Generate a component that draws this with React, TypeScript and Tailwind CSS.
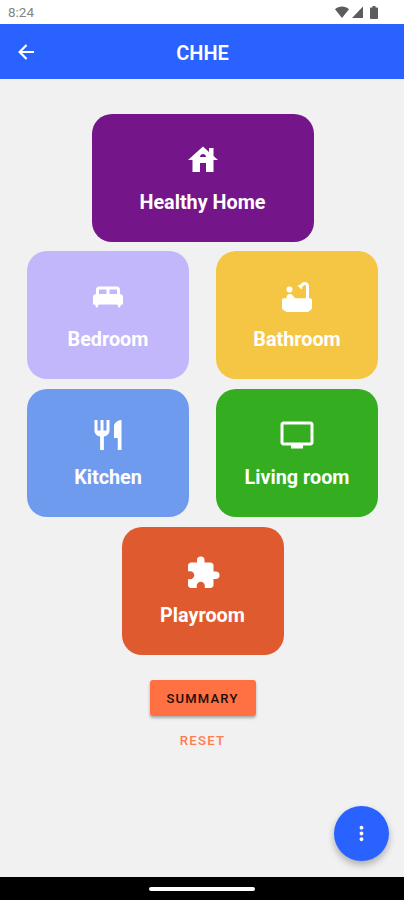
import type { ComponentType } from "react";
import {
  MdExtension,
  MdHouse,
  MdKingBed,
  MdMoreVert,
  MdRestaurant,
  MdTv,
} from "react-icons/md";

interface RoomCardProps {
  label: string;
  icon: ComponentType<{ className?: string }>;
  className: string;
}

function BathIcon({ className }: { className?: string }) {
  return (
    <svg className={className} viewBox="0 0 24 24" fill="currentColor">
      {/* Bather */}
      <circle cx="7" cy="7" r="2" />
      <path d="M5 13v-.8c0-1.300 1-2.200 2.200-2.200.7 0 1.200.2 1.700.7l1.400 1.600c.3.300.5.500.9.700z" />
      {/* Tap */}
      <path d="M20 13.500V4.830C20 3.270 18.730 2 17.170 2c-.75 0-1.470.3-2 .830l-1.250 1.250c-.16-.05-.33-.08-.51-.08-.4 0-.77.120-1.080.320l2.760 2.760c.2-.31.320-.68.320-1.080 0-.18-.03-.34-.07-.51l1.250-1.250a.83.830 0 0 1 1.410.590v8.670z" />
      {/* Tub */}
      <path d="M3.200 12.800h17.600c.7 0 1.200.5 1.200 1.200v5c0 1.100-.7 1.900-1.700 2.200-.3.500-.7.800-1.300.8H5c-.6 0-1-.3-1.300-.8C2.700 20.900 2 20.100 2 19v-5c0-.7.5-1.200 1.200-1.200z" />
    </svg>
  );
}

function RoomCard({ label, icon: Icon, className }: RoomCardProps) {
  return (
    <button
      className={`flex h-[128px] flex-col items-center rounded-[20px] pt-[28px] text-white ${className}`}
    >
      <Icon className="size-[36px]" />
      <span className="mt-[11px] text-[19.8px] leading-[28px] font-bold whitespace-nowrap">
        {label}
      </span>
    </button>
  );
}

function StatusBar() {
  return (
    <div className="flex h-[24px] items-center justify-between bg-white pr-[26px] pl-[8px] text-[#5c5c5c]">
      <span className="pt-[2px] text-[13.5px] leading-none text-[#858585]">8:24</span>
      <div className="flex items-center">
        {/* Wifi */}
        <svg className="h-[12px] w-[14px]" viewBox="0 0 14 12" fill="currentColor">
          <path d="M7 12 0 3.2C2 1.4 4.4.5 7 .5s5 .9 7 2.700z" />
        </svg>
        {/* Signal */}
        <svg className="ml-[3px] h-[12px] w-[11px]" viewBox="0 0 11 12" fill="currentColor">
          <path d="M11 .5V12H0z" />
        </svg>
        {/* Battery */}
        <svg className="ml-[7px] h-[13px] w-[8px]" viewBox="0 0 8 13" fill="currentColor">
          <path d="M2.500 0h3v1.500H7.200q.8 0 .8.800v9.900q0 .8-.8.800H.8q-.8 0-.8-.800V2.300q0-.8.800-.8h1.700z" />
        </svg>
      </div>
    </div>
  );
}

function App() {
  return (
    <div className="flex h-[900px] w-[404px] flex-col overflow-hidden bg-[#f1f1f1] font-[Roboto,sans-serif]">
      <StatusBar />

      {/* Header */}
      <header className="grid h-[55px] grid-cols-[52px_1fr_52px] items-center bg-[#2962ff] text-white">
        <button className="flex justify-center" aria-label="Back">
          <svg
            className="size-[16px]"
            viewBox="0 0 16 16"
            fill="none"
            stroke="currentColor"
            strokeWidth="2.2"
          >
            <path d="M16 8H2M8.600 1 1.600 8l7 7" />
          </svg>
        </button>
        <h1 className="pt-[2px] pl-px text-center text-[20px] font-semibold">CHHE</h1>
      </header>

      {/* Rooms */}
      <main className="flex flex-1 flex-col items-center pt-[34.5px] pl-px">
        <RoomCard label="Healthy Home" icon={MdHouse} className="w-[222px] bg-[#74168a]" />
        <div className="my-[9.8px] grid grid-cols-2 gap-x-[27px] gap-y-[9.8px]">
          <RoomCard label="Bedroom" icon={MdKingBed} className="w-[162px] bg-[#c3b7fb]" />
          <RoomCard label="Bathroom" icon={BathIcon} className="w-[162px] bg-[#f5c644]" />
          <RoomCard label="Kitchen" icon={MdRestaurant} className="w-[162px] bg-[#6f9bef]" />
          <RoomCard label="Living room" icon={MdTv} className="w-[162px] bg-[#34ad20]" />
        </div>
        <RoomCard label="Playroom" icon={MdExtension} className="w-[162px] bg-[#e05a30]" />

        <button className="mt-[25.5px] h-[36px] w-[106px] rounded-[3px] bg-[#ff7043] text-[13px] font-medium tracking-[1.2px] text-[#1c0d08] shadow-[0_2px_3px_rgba(0,0,0,0.3)]">
          SUMMARY
        </button>
        <button className="mt-[15px] text-[13.2px] leading-[20px] font-medium tracking-[1.2px] text-[#ff7b52]">
          RESET
        </button>

        <button
          className="mt-auto mr-[15px] mb-[16px] flex size-[55px] items-center justify-center self-end rounded-full bg-[#2962ff] text-white shadow-[0_4px_7px_rgba(0,0,0,0.28)]"
          aria-label="More"
        >
          <MdMoreVert className="size-[23px]" />
        </button>
      </main>

      {/* Gesture bar */}
      <footer className="flex h-[23px] items-center justify-center bg-black">
        <div className="h-[4px] w-[106px] rounded-full bg-white" />
      </footer>
    </div>
  );
}

export default App;
